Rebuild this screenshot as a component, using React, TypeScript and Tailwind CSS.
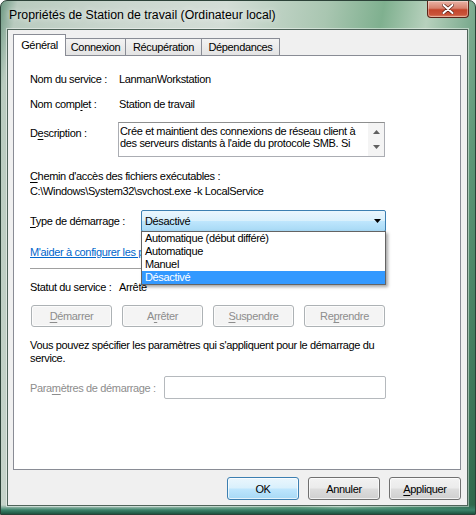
import React from "react";

type Kids = { children: React.ReactNode };

const Mn = ({ children }: Kids) => <span className="underline decoration-1 underline-offset-[2px]">{children}</span>;

type BtnProps = { children: React.ReactNode; disabled?: boolean; primary?: boolean; className?: string };

function VistaButton({ children, disabled, primary, className }: BtnProps) {
  let look = "border-[#707070] bg-[linear-gradient(#f2f2f2_0%,#ebebeb_48%,#dddddd_52%,#cfcfcf_100%)] text-black";
  if (disabled) look = "border-[#adb2b5] bg-[#f4f4f4] text-[#8d8d8d]";
  else if (primary) look = "border-[#3c7fb1] bg-[linear-gradient(#eaf6fd_0%,#d9f0fc_48%,#bee6fd_52%,#a7d9f5_100%)] text-black";
  return (
    <div
      className={`flex items-center justify-center whitespace-nowrap rounded-[3px] border shadow-[inset_0_0_0_1px_rgba(255,255,255,0.7)] ${look} ${className ?? ""}`}
    >
      {children}
    </div>
  );
}

const tabs = [
  { label: "Général", w: "w-[53px]", active: true },
  { label: "Connexion", w: "w-[60px]", active: false },
  { label: "Récupération", w: "w-[76px]", active: false },
  { label: "Dépendances", w: "w-[78px]", active: false },
];

const options = ["Automatique (début différé)", "Automatique", "Manuel", "Désactivé"];

export default function App() {
  return (
    <div className="flex h-[515px] w-[476px] flex-col overflow-hidden rounded-t-[7px] border border-[#2c4238] bg-[linear-gradient(to_top,#1c5440_0px,#3b826a_4px,rgba(60,130,100,0)_9px),linear-gradient(100deg,#6f9a84_0%,#b9cbbf_3%,#cbd7cf_22%,#d3ddd6_40%,#a9c6b1_58%,#7fb08f_68%,#b7d1bd_76%,#5e9878_88%,#2c6549_100%)] font-['Liberation_Sans',Arial,sans-serif] text-[11px] leading-[14px] tracking-[-0.35px] text-black">
      {/* title bar */}
      <div className="flex h-[28px] shrink-0 items-start justify-between">
        <div className="flex h-[28px] items-center whitespace-nowrap pl-[8px] text-[12.3px] tracking-normal [text-shadow:0_0_6px_rgba(255,255,255,0.9)]">
          Propriétés de Station de travail (Ordinateur local)
        </div>
        <div className="mr-[6px] flex h-[17px] w-[42px] items-center justify-center rounded-b-[4px] border border-t-0 border-[#5b2418] bg-[linear-gradient(#eab3a5_0%,#d7826e_45%,#c4462c_55%,#c9543a_85%,#e08a6a_100%)] shadow-[inset_0_0_0_1px_rgba(255,255,255,0.35)]">
          <svg width="12" height="10" viewBox="0 0 12 10">
            <path d="M1.5 1 L10.5 9 M10.5 1 L1.5 9" stroke="#5a2216" strokeWidth="3.4" strokeLinecap="round" />
            <path d="M1.5 1 L10.5 9 M10.5 1 L1.5 9" stroke="#ffffff" strokeWidth="2" strokeLinecap="round" />
          </svg>
        </div>
      </div>

      {/* client area */}
      <div className="ml-[6px] flex h-[477px] w-[461px] shrink-0 flex-col border border-[#4f645a] bg-[#f0f0f0] shadow-[0_0_0_1px_rgba(255,255,255,0.45)]">
        {/* tabs */}
        <div className="mt-[4px] flex items-end pl-[5px]">
          {tabs.map((t) =>
            t.active ? (
              <div
                key={t.label}
                className={`relative z-10 -mb-px flex h-[22px] ${t.w} items-center justify-center border border-b-0 border-[#898c95] bg-white pb-[2px]`}
              >
                {t.label}
              </div>
            ) : (
              <div
                key={t.label}
                className={`flex h-[17px] ${t.w} items-center justify-center border border-b-0 border-l-0 border-[#898c95] bg-[linear-gradient(#f3f3f3,#e3e3e3)]`}
              >
                {t.label}
              </div>
            )
          )}
        </div>

        {/* tab page */}
        <div className="ml-[5px] flex h-[415px] w-[448px] flex-col whitespace-nowrap border border-[#898c95] bg-white pl-[16px]">
          <div className="mt-[10px] flex h-[25px] items-center">
            <div className="w-[88px]">Nom du service :</div>
            <div className="pl-px">LanmanWorkstation</div>
          </div>
          <div className="flex h-[25px] items-center">
            <div className="w-[88px]">
              Nom comp<Mn>l</Mn>et :
            </div>
            <div className="pl-px">Station de travail</div>
          </div>

          <div className="mt-[6px] flex items-start">
            <div className="w-[88px] pt-[4px]">
              D<Mn>e</Mn>scription :
            </div>
            <div className="flex h-[35px] w-[267px] border border-[#abadb3] border-t-[#8e8f8f] bg-white">
              <div className="flex-1 overflow-hidden pl-[1px] pt-[2px] leading-[12px]">
                <div>Crée et maintient des connexions de réseau client à</div>
                <div>des serveurs distants à l'aide du protocole SMB. Si</div>
              </div>
              <div className="flex w-[16px] flex-col items-center justify-between bg-[#f4f4f4] py-[7px]">
                <svg width="7" height="4" viewBox="0 0 7 4">
                  <path d="M0 4 L3.5 0 L7 4 Z" fill="#606060" />
                </svg>
                <svg width="7" height="4" viewBox="0 0 7 4">
                  <path d="M0 0 L7 0 L3.5 4 Z" fill="#606060" />
                </svg>
              </div>
            </div>
          </div>

          <div className="mt-[12px] leading-[15px]">
            <div>
              <Mn>C</Mn>hemin d'accès des fichiers exécutables :
            </div>
            <div>C:\Windows\System32\svchost.exe -k LocalService</div>
          </div>

          <div className="mt-[11px] flex items-center">
            <div className="w-[111px]">
              <Mn>T</Mn>ype de démarrage :
            </div>
            <div className="relative w-[245px]">
              <div className="flex h-[22px] items-center justify-between rounded-[2px] border border-[#3c7fb1] bg-[linear-gradient(#eaf6fd_0%,#d9f0fc_48%,#bee6fd_52%,#a7d9f5_100%)] pl-[3px] pr-[4px]">
                <span>Désactivé</span>
                <svg width="7" height="4" viewBox="0 0 7 4">
                  <path d="M0 0 L7 0 L3.5 4 Z" fill="#000" />
                </svg>
              </div>
              <div className="absolute left-0 top-[21px] z-20 w-[245px] border border-[#646464] bg-white shadow-[2px_2px_3px_rgba(0,0,0,0.35)]">
                {options.map((o) => (
                  <div
                    key={o}
                    className={`h-[13px] pl-[3px] leading-[13px] ${o === "Désactivé" ? "bg-[#3399ff] text-white" : ""}`}
                  >
                    {o}
                  </div>
                ))}
              </div>
            </div>
          </div>

          <div className="mt-[13px] text-[#0066cc] underline decoration-1">
            M'aider à configurer les propriétés de récupération du service.
          </div>
          <div className="mt-[9px] h-px w-[355px] bg-[#a0a0a0]" />

          <div className="mt-[11px] flex">
            <div className="w-[88px]">Statut du service :</div>
            <div className="pl-px">Arrêté</div>
          </div>

          <div className="ml-px mt-[11px] flex w-[354px] justify-between">
            <VistaButton disabled className="h-[22px] w-[81px]">
              <Mn>D</Mn>émarrer
            </VistaButton>
            <VistaButton disabled className="h-[22px] w-[81px]">
              A<Mn>r</Mn>rêter
            </VistaButton>
            <VistaButton disabled className="h-[22px] w-[81px]">
              <Mn>S</Mn>uspendre
            </VistaButton>
            <VistaButton disabled className="h-[22px] w-[81px]">
              Re<Mn>p</Mn>rendre
            </VistaButton>
          </div>

          <div className="mt-[12px] leading-[13px]">
            <div>Vous pouvez spécifier les paramètres qui s'appliquent pour le démarrage du</div>
            <div>service.</div>
          </div>

          <div className="mt-[11px] flex items-center">
            <div className="w-[134px] text-[#8d8d8d]">
              Para<Mn>m</Mn>ètres de démarrage :
            </div>
            <div className="h-[23px] w-[222px] rounded-[2px] border border-[#b5b9bd] bg-white" />
          </div>
        </div>

        {/* dialog buttons */}
        <div className="mt-[7px] flex justify-end gap-[9px] pr-[6px]">
          <VistaButton primary className="h-[23px] w-[72px]">
            OK
          </VistaButton>
          <VistaButton className="h-[23px] w-[72px]">Annuler</VistaButton>
          <VistaButton className="h-[23px] w-[72px]">
            <Mn>A</Mn>ppliquer
          </VistaButton>
        </div>
      </div>
    </div>
  );
}
